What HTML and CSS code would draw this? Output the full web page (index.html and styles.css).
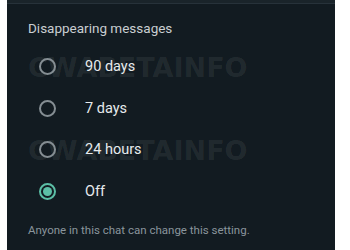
FILE: index.html
```html
<!DOCTYPE html>
<html>
<head>
<meta charset="utf-8">
<link rel="stylesheet" href="styles.css">
</head>
<body>
<div class="panel">
  <div class="topbar"></div>
  <div class="content">
    <div class="title">Disappearing messages</div>
    <ul class="options">
      <li class="option"><span class="radio"></span><span class="label">90 days</span></li>
      <li class="option"><span class="radio"></span><span class="label">7 days</span></li>
      <li class="option"><span class="radio"></span><span class="label">24 hours</span></li>
      <li class="option"><span class="radio checked"></span><span class="label">Off</span></li>
    </ul>
    <div class="note">Anyone in this chat can change this setting.</div>
  </div>
  <div class="watermark wm1" aria-hidden="true">CWABETAINFO</div>
  <div class="watermark wm2" aria-hidden="true">CWABETAINFO</div>
</div>
</body>
</html>
```

FILE: styles.css
```css
html, body {
  margin: 0;
  padding: 0;
  background: #ffffff;
}
body {
  width: 350px;
  height: 250px;
  overflow: hidden;
  font-family: Roboto, "Liberation Sans", sans-serif;
}
.panel {
  position: relative;
  margin-left: 7px;
  width: 328px;
  height: 250px;
  background: #121b21;
  overflow: hidden;
}
.topbar {
  height: 3px;
  background: #1a242a;
  border-bottom: 1px solid #27323a;
}
.content {
  padding: 16px 0 0 21px;
}
.title {
  font-size: 13.5px;
  line-height: 17px;
  color: #c9ced1;
}
.options {
  list-style: none;
  margin: 0;
  padding: 0;
  margin-top: 9px;
}
.option {
  display: flex;
  align-items: center;
  height: 41.5px;
  position: relative;
  z-index: 2;
}
.radio {
  box-sizing: border-box;
  width: 17px;
  height: 17px;
  margin-left: 11px;
  border: 2px solid #858e93;
  border-radius: 50%;
  display: flex;
  align-items: center;
  justify-content: center;
}
.radio.checked {
  border-color: #5cbfa6;
}
.radio.checked::after {
  content: "";
  width: 9px;
  height: 9px;
  border-radius: 50%;
  background: #5cbfa6;
}
.label {
  margin-left: 29px;
  font-size: 14.5px;
  color: #e6eaec;
}
.note {
  margin-top: 11px;
  font-size: 11.5px;
  color: #8a959c;
}
.watermark {
  position: absolute;
  left: 21px;
  font-family: "DejaVu Sans", sans-serif;
  font-weight: bold;
  font-size: 27px;
  color: rgba(255, 255, 255, 0.08);
  z-index: 1;
  line-height: 22px;
}
.wm1 { top: 57px; }
.wm2 { top: 140px; }
```
